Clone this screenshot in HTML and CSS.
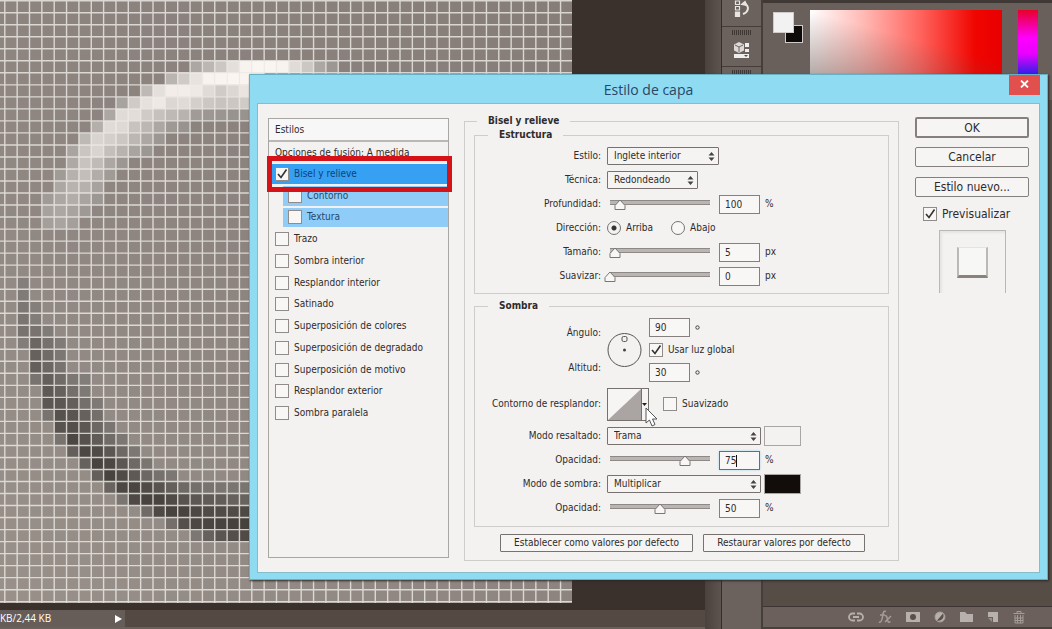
FILE: index.html
```html
<!DOCTYPE html>
<html lang="es">
<head>
<meta charset="utf-8">
<title>Estilo de capa</title>
<link rel="stylesheet" href="styles.css">
</head>
<body>
<main class="app">
  <section class="document">
    <div class="workspace">
      <svg class="artboard" width="572" height="603" viewBox="0 0 572 603" aria-hidden="true">
        <defs>
          <linearGradient id="shade" x1="1" y1="0" x2="0" y2="1"><stop offset="0" stop-color="#867d79"/><stop offset="0.5" stop-color="#8d8480"/><stop offset="1" stop-color="#989089"/></linearGradient>
        </defs>
        <rect width="572" height="603" fill="url(#shade)"/>
        <g id="pixels"></g>
        <path id="grid" fill="none" stroke="#f1eeeb" stroke-opacity=".78" stroke-width="1.4"/>
      </svg>
    </div>
    <footer class="status"><span class="status-info">KB/2,44 KB</span><span class="status-arrow"></span></footer>
  </section>
  <div class="scrollbar"></div>
  <aside class="dock">
    <div class="dock-cell first">
      <svg width="18" height="18" viewBox="0 0 18 18" fill="none" stroke="#e8e4e1" stroke-width="1.2"><path d="M2.500 1h4v3.500h-4zM2.500 6.500h4V10h-4z"/><path d="M2.500 12h4v4.500h-4z" fill="#e8e4e1"/><path d="M8.500 4.500L12 1.500l2 4z" fill="#e8e4e1"/><path d="M12.500 4c4 3 3 8-2.500 10" stroke-width="2"/></svg>
    </div>
    <div class="dock-cell">
      <i class="grip"></i>
      <svg width="18" height="17" viewBox="0 0 18 17"><path d="M6 0l5 2.500v6L6 11 1 8.500v-6z" fill="#ddd8d5"/><path d="M2 3l4 2 4-2M6 5v5" stroke="#6b625e" fill="none"/><path d="M12 1h4v4h-4zM12 7h4v3h-4zM1 12h15v4H1z" fill="#eee"/><path d="M11 13h4l-2 2z" fill="#564e49"/></svg>
    </div>
    <div class="dock-cell"><i class="grip"></i></div>
  </aside>
  <aside class="panels">
    <div class="color-panel">
      <div class="chips"><span class="chip back"></span><span class="chip front"></span></div>
      <div class="field"></div>
      <div class="hue"></div>
    </div>
    <div class="layer-tools">
      <svg width="16" height="12" viewBox="0 0 16 12" fill="none" stroke="#b8b0ac" stroke-width="1.8"><path d="M7 2.500H4.500a3.500 3.500 0 000 7H7M9 2.500h2.500a3.500 3.500 0 010 7H9M5 6h6"/></svg>
      <svg width="14" height="14" viewBox="0 0 14 14" fill="none" stroke="#a69d98" stroke-width="1.500"><path d="M8 1.500C5 0 5 4 4.500 7S3 13 1 12M2 5h5M7 6c2-1 2 2 2.500 4s1 3 3 1.500M13 6L7 12"/></svg>
      <svg width="14" height="12" viewBox="0 0 14 12"><path d="M0 1h14v10H0z" fill="#b8b0ac"/><circle cx="7" cy="6" r="3" fill="#5a504b"/></svg>
      <svg width="12" height="12" viewBox="0 0 12 12"><circle cx="6" cy="6" r="5" fill="#b8b0ac" stroke="#a69d98"/><path d="M9 2.500A5 5 0 013 9.500z" fill="#5a504b"/></svg>
      <svg width="13" height="12" viewBox="0 0 13 12"><path d="M0 1h5l2 2h6v8H0z" fill="#b8b0ac"/></svg>
      <svg width="12" height="12" viewBox="0 0 12 12"><path d="M1 1h10v10H6V6H1z" fill="#b8b0ac"/><path d="M1 7h4v4z" fill="#978e89"/></svg>
      <svg width="12" height="13" viewBox="0 0 12 13" fill="none" stroke="#a69d98"><path d="M4 2V.500h4V2M.500 2.500h11M2 4v8h8V4M4.500 4v8M7.500 4v8M2 7h8M2 9.500h8"/></svg>
    </div>
  </aside>
</main>

<section class="dialog" role="dialog" aria-labelledby="dialog-title">
  <header class="titlebar">
    <h1 class="title" id="dialog-title">Estilo de capa</h1>
    <button class="close" aria-label="Cerrar"><svg width="9" height="8" viewBox="0 0 9 8"><path d="M1 .500l7 7M8 .500l-7 7" stroke="#fff" stroke-width="1.800"/></svg></button>
  </header>
  <form class="content">
    <nav class="styles">
      <h2 class="styles-head">Estilos</h2>
      <p class="blend">Opciones de fusión: A medida</p>
      <div class="style-list">
        <label class="style selected"><input class="check" type="checkbox" checked>Bisel y relieve</label>
        <label class="style sub"><input class="check" type="checkbox">Contorno</label>
        <label class="style sub"><input class="check" type="checkbox">Textura</label>
        <label class="style"><input class="check" type="checkbox">Trazo</label>
        <label class="style"><input class="check" type="checkbox">Sombra interior</label>
        <label class="style"><input class="check" type="checkbox">Resplandor interior</label>
        <label class="style"><input class="check" type="checkbox">Satinado</label>
        <label class="style"><input class="check" type="checkbox">Superposición de colores</label>
        <label class="style"><input class="check" type="checkbox">Superposición de degradado</label>
        <label class="style"><input class="check" type="checkbox">Superposición de motivo</label>
        <label class="style"><input class="check" type="checkbox">Resplandor exterior</label>
        <label class="style"><input class="check" type="checkbox">Sombra paralela</label>
      </div>
      <div class="highlight"></div>
    </nav>

    <fieldset class="group settings">
      <legend class="legend">Bisel y relieve</legend>
      <fieldset class="group structure">
        <legend class="legend">Estructura</legend>
        <div class="row"><label class="name" for="estilo">Estilo:</label><select class="select medium" id="estilo"><option>Inglete interior</option></select></div>
        <div class="row"><label class="name" for="tecnica">Técnica:</label><select class="select small" id="tecnica"><option>Redondeado</option></select></div>
        <div class="row"><label class="name" for="prof">Profundidad:</label><input class="slider" type="range" value="10" aria-label="Profundidad"><input class="value" id="prof" value="100"><span class="unit">%</span></div>
        <div class="row"><span class="name">Dirección:</span><label class="option"><input class="radio" type="radio" name="dir" checked>Arriba</label><label class="option"><input class="radio" type="radio" name="dir">Abajo</label></div>
        <div class="row"><label class="name" for="tam">Tamaño:</label><input class="slider" type="range" value="5" aria-label="Tamaño"><input class="value" id="tam" value="5"><span class="unit">px</span></div>
        <div class="row"><label class="name" for="suav">Suavizar:</label><input class="slider" type="range" value="0" aria-label="Suavizar"><input class="value" id="suav" value="0"><span class="unit">px</span></div>
      </fieldset>
      <fieldset class="group shadow">
        <legend class="legend">Sombra</legend>
        <div class="row light">
          <div class="names"><label for="ang">Ángulo:</label><label for="alt">Altitud:</label></div>
          <svg class="dial" width="36" height="36" viewBox="0 0 36 36" fill="none" stroke="#555"><circle cx="17.500" cy="18" r="16.500"/><rect x="15" y="4.500" width="5" height="5" rx="1.500"/><circle cx="17.500" cy="18" r="1.500" fill="#444" stroke="none"/></svg>
          <div class="angles">
            <div class="angle"><input class="value" id="ang" value="90"><svg width="5" height="5" viewBox="0 0 5 5"><circle cx="2.500" cy="2.500" r="1.700" fill="none" stroke="#444"/></svg></div>
            <label class="option"><input class="check" type="checkbox" checked>Usar luz global</label>
            <div class="angle"><input class="value" id="alt" value="30"><svg width="5" height="5" viewBox="0 0 5 5"><circle cx="2.500" cy="2.500" r="1.700" fill="none" stroke="#444"/></svg></div>
          </div>
        </div>
        <div class="row contour">
          <span class="name">Contorno de resplandor:</span>
          <button type="button" class="curve" aria-label="Contorno">
            <svg width="42" height="33" viewBox="0 0 42 33"><rect x=".5" y=".5" width="41" height="32" fill="#f6f5f4" stroke="#77716e"/><path d="M1 32L34 1V32z" fill="#aaa5a2"/><path d="M34.500 1v31" stroke="#77716e"/><path d="M35 15h5l-2.500 3z" fill="#222"/></svg>
            <svg class="pointer" width="14" height="20" viewBox="0 0 14 20"><path d="M1 1v15l3.500-3 2.500 6 3-1.500-2.500-5.500H12z" fill="#fff" stroke="#555"/></svg>
          </button>
          <label class="option"><input class="check" type="checkbox">Suavizado</label>
        </div>
        <div class="row"><label class="name" for="modor">Modo resaltado:</label><select class="select large" id="modor"><option>Trama</option></select><button type="button" class="swatch" aria-label="Color de resaltado"></button></div>
        <div class="row"><label class="name" for="opr">Opacidad:</label><input class="slider" type="range" value="75" aria-label="Opacidad de resaltado"><span class="edit"><input class="value active" id="opr" value="75"><i class="caret"></i></span><span class="unit">%</span></div>
        <div class="row"><label class="name" for="modos">Modo de sombra:</label><select class="select large" id="modos"><option>Multiplicar</option></select><button type="button" class="swatch black" aria-label="Color de sombra"></button></div>
        <div class="row"><label class="name" for="ops">Opacidad:</label><input class="slider" type="range" value="50" aria-label="Opacidad de sombra"><input class="value" id="ops" value="50"><span class="unit">%</span></div>
      </fieldset>
      <div class="defaults"><button type="button" class="button wide">Establecer como valores por defecto</button><button type="button" class="button">Restaurar valores por defecto</button></div>
    </fieldset>

    <div class="actions">
      <button type="button" class="action primary">OK</button>
      <button type="button" class="action">Cancelar</button>
      <button type="button" class="action">Estilo nuevo...</button>
      <label class="option preview-option"><input class="check" type="checkbox" checked>Previsualizar</label>
      <div class="preview"><div class="preview-tile"></div></div>
    </div>
  </form>
</section>
<script src="canvas.js"></script>
</body>
</html>
```
FILE: styles.css
```css
* { box-sizing: border-box; }
body {
  margin: 0;
  height: 100vh;
  position: relative;
  overflow: hidden;
  background: #3a312d;
  font: 10px/14px "DejaVu Sans Condensed", "DejaVu Sans", sans-serif;
  color: #2f2b2a;
}
h1, h2, p { margin: 0; font-weight: normal; }
input, select, button { font: inherit; color: inherit; margin: 0; padding: 0; }

/* Application behind the dialog */
.app { display: flex; height: 100vh; }
.document { flex: 1; display: flex; flex-direction: column; min-width: 0; border-bottom: 2px solid #6b605b; }
.workspace { flex: 1; min-height: 0; overflow: hidden; background: #3a312d; }
.artboard { display: block; }
.status { height: 17px; display: flex; background: #544a43; font-family: "Open Sans", sans-serif; color: #fff; }
.status-info { width: 125px; background: #675d58; line-height: 16px; white-space: nowrap; }
.status-arrow { margin-left: -10px; align-self: center; border: 4px solid transparent; border-left: 7px solid #fff; border-right: 0; }
.scrollbar { width: 17px; background: linear-gradient(90deg, #4b423e, #5d5450); border-right: 1px solid #352d29; }
.dock { width: 41px; background: #6b625e; border-right: 2px solid #463e3a; }
.dock-cell { height: 40px; border-bottom: 1px solid #453d39; display: flex; flex-direction: column; align-items: center; gap: 7px; padding-top: 3px; }
.dock-cell:last-child { border-bottom: 0; }
.dock-cell svg { flex: none; }
.dock-cell.first { height: 27px; padding-top: 0; }
.grip { width: 19px; height: 5px; background: repeating-linear-gradient(90deg, #3f3733 0 1px, #6b625e 1px 2px); }
.panels { width: 289px; display: flex; flex-direction: column; justify-content: space-between; background: #564d47; }
.color-panel { display: flex; align-items: flex-start; padding: 7px 14px 0 10px; height: 100px; background: #69605c; border-top: 3px solid #403834; }
.chips { display: grid; width: 30px; height: 31px; margin-top: 2px; }
.chip { grid-area: 1 / 1; border: 1px solid #d0cbc8; }
.chip.front { width: 21px; height: 21px; background: #f2f2f2; }
.chip.back { width: 18px; height: 18px; justify-self: end; align-self: end; background: #0d0a09; }
.field { flex: 1; height: 80px; margin-left: 7px; background: linear-gradient(15deg, rgba(100,80,75,.6), rgba(100,80,75,0) 60%), linear-gradient(90deg, #fff 0, #ffb9b4 28%, #ff625c 58%, #f00500 86%, #e80000); }
.hue { width: 20px; height: 80px; margin-left: 16px; background: linear-gradient(#e8002a, #f0f 35%, #e800ff 55%, #3020e8 80%); }
.layer-tools { height: 23px; display: flex; align-items: center; justify-content: space-between; padding: 0 27px 0 85px; background: #6b605b; border-top: 1px solid #3d3531; border-bottom: 2px solid #48403b; }

/* Dialog window */
.dialog { position: absolute; left: 249px; top: 74px; right: 4px; padding: 0 7px 6px; background: #8fdcf2; border: 1px solid #68aec4; box-shadow: 1px 1px 2px #302824; }
.titlebar { display: flex; height: 28px; }
.title { flex: 1; padding-left: 31px; text-align: center; font: 14px/29px "Open Sans", sans-serif; color: #284667; }
.close { width: 31px; height: 20px; border: 0; background: #e2504e; }
.content { display: flex; align-items: flex-start; padding: 10px 10px 11px; background: #f3f2f1; border: 1px solid #86bdca; }

.styles { position: relative; width: 181px; height: 440px; margin-top: 4px; border: 1px solid #aaa6a4; }
.styles-head { height: 23px; padding-left: 6px; border-bottom: 2px solid #bbb7b5; font-size: 10px; line-height: 21px; background: #f8f7f7; }
.blend { padding: 4px 0 0 6px; height: 21px; }
.style-list { display: grid; grid-auto-rows: 1fr; height: 261px; }
.style, .option { display: flex; align-items: center; }
.style { padding-left: 6px; border-bottom: 1px solid transparent; border-top: 1px solid transparent; background-clip: padding-box; }
.style.selected { background-color: #36a0f2; color: #12407a; }
.style.sub { margin-left: 14px; padding-left: 5px; background-color: #90ccf8; color: #254866; }
.check { appearance: none; flex: none; width: 14px; height: 14px; margin-right: 5px; border: 1px solid #918c89; background: #f8f7f6; }
.check:checked { background: #f8f7f6 url("data:image/svg+xml,%3Csvg xmlns='http://www.w3.org/2000/svg' viewBox='0 0 12 12'%3E%3Cpath d='M2 6l3 3.500L10.500 1.500' fill='none' stroke='%23333' stroke-width='1.600'/%3E%3C/svg%3E") center / 12px 12px no-repeat; }
.highlight { position: absolute; left: -2px; right: -4px; top: 37px; height: 36px; border: 5px solid #d51217; }

.group { margin: 0; padding: 0 9px; border: 1px solid #cfccca; min-width: 0; }
.legend { height: 14px; margin-left: 3px; padding: 0 11px; font-weight: bold; font-size: 10px; }
.settings { width: 435px; margin-left: 15px; padding-bottom: 8px; }
.structure { padding: 2px 0 5px; }
.shadow { margin-top: 5px; padding: 3px 0 6px; }
.group .group .legend { margin-left: 13px; }
.row { display: flex; align-items: center; height: 24px; }
.name { width: 126px; margin-right: 6px; text-align: right; white-space: nowrap; }
.select { appearance: none; height: 18px; padding-left: 6px; border: 1px solid #77726f; border-radius: 1px; background: #f5f4f3 url("data:image/svg+xml,%3Csvg xmlns='http://www.w3.org/2000/svg' viewBox='0 0 7 9'%3E%3Cpath d='M.5 3.500L3.500 0 6.500 3.500zM.5 5.500L3.500 9 6.500 5.500z' fill='%23444'/%3E%3C/svg%3E") right 3px center / 7px 9px no-repeat; }
.select.medium { width: 112px; }
.select.small { width: 91px; }
.select.large { width: 154px; }
.slider { appearance: none; width: 112px; height: 18px; margin: 0 3px 0 -3px; background: linear-gradient(#8e8986 0 1px, #b9b5b2 1px 4px, #8e8986 4px) center 5px / calc(100% - 12px) 5px no-repeat; }
.slider::-webkit-slider-thumb { appearance: none; width: 12px; height: 12px; border: 0; background: url("data:image/svg+xml,%3Csvg xmlns='http://www.w3.org/2000/svg' viewBox='0 0 12 12'%3E%3Cpath d='M6 2L11 7.500v4H1v-4z' fill='%23f8f7f6' stroke='%23777'/%3E%3C/svg%3E") no-repeat; }
.value { width: 41px; height: 19px; padding-left: 5px; border: 1px solid #85807d; background: #f8f7f6; }
.value.active { border-color: #47789a; box-shadow: 0 0 2px #9bd4ee; }
.unit { margin-left: 5px; }
.edit { position: relative; }
.edit .value { display: block; }
.caret { position: absolute; left: 17px; top: 4px; width: 1px; height: 12px; background: #111; }
.radio { appearance: none; width: 14px; height: 14px; margin-right: 5px; border: 1px solid #77726f; border-radius: 50%; background: #f8f7f6; }
.radio:checked { background: radial-gradient(circle, #333 0 2px, transparent 3px); }
.row .option + .option { margin-left: 18px; }
.light { height: 68px; }
.names { display: flex; flex-direction: column; gap: 21px; width: 126px; margin-right: 6px; text-align: right; }
.angles { display: flex; flex-direction: column; gap: 6px; margin-left: 6px; }
.angle { display: flex; align-items: center; gap: 5px; }
.contour { height: 40px; }
.curve { position: relative; display: block; width: 42px; height: 33px; border: 0; background: none; margin-right: 14px; }
.curve svg { display: block; }
.curve .pointer { position: absolute; left: 38px; top: 19px; }
.swatch { width: 37px; height: 20px; margin-left: 3px; border: 1px solid #aaa6a3; background: #f3f2f1; }
.swatch.black { background: #120d0b; }
.defaults { display: flex; gap: 10px; padding: 7px 0 0 26px; }
.button { width: 162px; height: 18px; border: 1px solid #77726f; border-radius: 1px; background: #f6f5f4; white-space: nowrap; }
.button.wide { width: 193px; }

.actions { flex: 1; display: flex; flex-direction: column; align-items: stretch; margin-left: 16px; padding-top: 3px; font-size: 12px; }
.action { height: 20px; margin-bottom: 10px; border: 1px solid #85807d; border-radius: 2px; background: #f6f5f4; }
.action.primary { height: 21px; margin-bottom: 9px; border-width: 2px; }
.preview-option { margin-left: 8px; white-space: nowrap; }
.preview { display: grid; place-items: center; align-self: center; width: 67px; height: 63px; margin-top: 9px; border: 1px solid #bbb7b5; border-bottom: 0; box-shadow: inset 2px 2px 2px #e5e4e3; }
.preview-tile { width: 31px; height: 31px; border: 1px solid #e5e4e3; border-right: 2px solid #bcb8b5; border-left: 2px solid #bcb8b5; border-bottom: 3px solid #8a827d; background: #f7f7f6; }
```
FILE: canvas.js
```js
const PITCH_X = 12.35;
const PITCH_Y = 12.02;

// Each run: row, first column, then two hex digits of brightness per cell.
const runs = [
  [5, 15, "a8 b8 c8 e0 f4 f6 f6 f4 dc c8 a8 98"],
  [6, 13, "b5 cc e4 f4 f5 f6 f5 f5"],
  [7, 11, "ba e0 ee ee ea dc cc d8 e5 e0"],
  [8, 9, "a4 cc e2 ea d8 dc d0 c8 c4 c8 cc"],
  [9, 8, "a8 dc de cc c2 ba b4 9c 98 96 94 94"],
  [10, 7, "b0 dc da c4 b8 a8 9a 94"],
  [11, 6, "ba d5 d0 c8 b8 a8 98"],
  [12, 5, "a5 c6 d5 c0 b4 a5 98"],
  [13, 5, "aa c4 bc a8 98"],
  [14, 4, "9c b2 bf ae 9c"],
  [15, 4, "a8 b4 b2 a3"],
  [16, 3, "9c a8 ae a5 98"],
  [17, 3, "a3 a8 a4 9a"],
  [18, 3, "a0 a5 a0"],
  [23, 1, "80"], [24, 1, "7c"], [25, 1, "78 80"], [26, 1, "76 7e"],
  [27, 1, "74 74 7c"],
  [28, 1, "7e 67 72 7c"],
  [29, 2, "62 6c 78"],
  [30, 2, "60 68 74"],
  [31, 2, "74 60 6c 78 7e"],
  [32, 3, "5a 62 70 7a"],
  [33, 3, "58 58 60 70 7a"],
  [34, 3, "74 52 56 62 70"],
  [35, 4, "54 50 58 68 76"],
  [36, 4, "74 48 52 5c 6c 78"],
  [37, 5, "60 48 4c 58 6a 78"],
  [38, 6, "62 44 48 58 6a 76"],
  [39, 7, "60 44 4c 5a 68 72 78"],
  [40, 8, "64 48 46 4c 54 60 6a 70 74 76 76 76"],
  [41, 9, "76 4a 44 44 4c 54 58 5c 5e 62 64"],
  [42, 11, "6c 4a 44 44 48 4c 4c 4c 4a"],
  [43, 13, "70 50 48 46 44 42 42"],
  [44, 15, "78 62 56 50 4c"]
];

const layer = document.getElementById("pixels");
for (const [row, start, levels] of runs) {
  levels.split(" ").forEach((hex, i) => {
    const v = parseInt(hex, 16);
    const cell = document.createElementNS("http://www.w3.org/2000/svg", "rect");
    cell.setAttribute("x", 4.8 + PITCH_X * (start + i));
    cell.setAttribute("y", 0.7 + PITCH_Y * row);
    cell.setAttribute("width", PITCH_X);
    cell.setAttribute("height", PITCH_Y);
    cell.setAttribute("fill", `rgb(${v + 4}, ${v - 1}, ${v - 5})`);
    layer.append(cell);
  });
}

let lines = "";
for (let x = 4.8; x < 572; x += PITCH_X) lines += `M${x} 0V603`;
for (let y = 0.7; y < 603; y += PITCH_Y) lines += `M0 ${y}H572`;
document.getElementById("grid").setAttribute("d", lines);
```
